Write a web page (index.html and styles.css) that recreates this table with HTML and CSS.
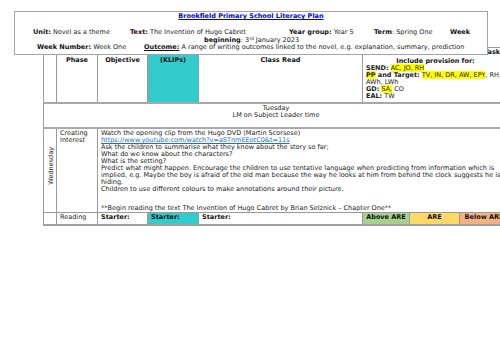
FILE: index.html
```html
<!DOCTYPE html>
<html>
<head>
<meta charset="utf-8">
<link rel="stylesheet" href="styles.css">
</head>
<body>
<div class="page">
  <table class="plan">
    <colgroup>
      <col class="c1"><col class="c2"><col class="c3"><col class="c4"><col class="c5"><col class="c6a"><col class="c6b"><col class="c6c">
    </colgroup>
    <tr class="r-head">
      <td></td>
      <td class="b ctr hd">Phase</td>
      <td class="b ctr hd">Objective</td>
      <td class="b ctr teal hd">(KLIPs)</td>
      <td class="b ctr hd">Class Read</td>
      <td colspan="3" class="prov">
        <div class="b nw task">Task</div>
        <div class="b ctr inc">Include provision for:</div>
        <div class="nw"><b>SEND:</b> <span class="hl">AC, JO, RH</span></div>
        <div class="nw"><b><span class="hl">PP</span> and Target:</b> <span class="hl">TV, IN, DR, AW, EPY</span>, RH,</div>
        <div class="nw">AWh, LWh</div>
        <div class="nw"><b>GD:</b> <span class="hl">SA,</span> CO</div>
        <div class="nw"><b>EAL:</b> TW</div>
      </td>
    </tr>
    <tr class="r-tue">
      <td colspan="8" class="ctr">Tuesday<br>LM on Subject Leader time</td>
    </tr>
    <tr class="r-wed">
      <td class="day"><span class="vert">Wednesday</span></td>
      <td>Creating<br>Interest</td>
      <td colspan="6" class="nw">
        Watch the opening clip from the Hugo DVD (Martin Scorsese)<br>
        <a class="yt" href="#">https://www.youtube.com/watch?v=aSTnmEEotC0&amp;t=11s</a><br>
        Ask the children to summarise what they know about the story so far;<br>
        What do we know about the characters?<br>
        What is the setting?<br>
        Predict what might happen. Encourage the children to use tentative language when predicting from information which is<br>
        implied, e.g. Maybe the boy is afraid of the old man because the way he looks at him from behind the clock suggests he is<br>
        hiding.<br>
        Children to use different colours to make annotations around their picture.
        <div class="begin">**Begin reading the text The Invention of Hugo Cabret by Brian Selznick – Chapter One**</div>
      </td>
    </tr>
    <tr class="r-read">
      <td></td>
      <td>Reading</td>
      <td class="b">Starter:</td>
      <td class="b teal">Starter:</td>
      <td class="b">Starter:</td>
      <td class="b ctr green">Above ARE</td>
      <td class="b ctr yellow">ARE</td>
      <td class="b ctr orange nw">Below ARE</td>
    </tr>
  </table>

  <div class="headbox">
    <div class="title"><a href="#">Brookfield Primary School Literacy Plan</a></div>
    <div class="hrow">
      <span class="f-unit"><b>Unit:</b> Novel as a theme</span>
      <span class="f-text"><b>Text:</b> The Invention of Hugo Cabret</span>
      <span class="f-year"><b>Year group:</b> Year 5</span>
      <span class="f-term"><b>Term</b>: Spring One</span>
      <span class="f-week"><b>Week</b></span>
    </div>
    <div class="hrow">
      <span class="f-begin"><b>beginning</b>: 3<sup>rd</sup> January 2023</span>
    </div>
    <div class="hrow">
      <span class="f-num"><b>Week Number:</b> Week One</span>
      <span><b class="ul">Outcome:</b> A range of writing outcomes linked to the novel, e.g. explanation, summary, prediction</span>
    </div>
  </div>
</div>
</body>
</html>
```

FILE: styles.css
```css
html, body {
  margin: 0;
  padding: 0;
  background: #ffffff;
}
body {
  width: 500px;
  height: 353px;
  overflow: hidden;
  font-family: "DejaVu Sans", Verdana, sans-serif;
  font-size: 6.5px;
  line-height: 7px;
  color: #222222;
}
.page {
  position: relative;
  width: 500px;
  height: 353px;
  padding-top: 47px;
  box-sizing: border-box;
}
.plan {
  margin-left: 43px;
  width: 465px;
  table-layout: fixed;
  border-collapse: collapse;
}
.c1 { width: 13px; }
.c2 { width: 41px; }
.c3 { width: 50px; }
.c4 { width: 51px; }
.c5 { width: 164px; }
.c6a { width: 47px; }
.c6b { width: 50px; }
.c6c { width: 49px; }
.plan td {
  border: 1px solid #9a9a9a;
  padding: 1px 3px 0 3px;
  vertical-align: top;
  overflow: hidden;
}
.plan tr.r-tue td,
.plan tr.r-wed td {
  border-top: 2px solid #a8a8a8;
}
.plan tr.r-read td {
  border-bottom: 2px solid #a0a0a0;
}
.r-head td { height: 53px; }
.plan .r-head td.hd { padding-top: 9px; height: 45px; }
.r-tue td { height: 22px; }
.r-wed td { height: 81px; }
.r-read td { height: 10px; }
.b { font-weight: bold; color: #111; }
.ctr { text-align: center; }
.nw { white-space: nowrap; }
.teal { background: #33cccc; }
.green { background: #a9d18e; }
.yellow { background: #ffd966; }
.orange { background: #f4b183; }
.hl { background: #ffff00; }
.task { padding-left: 118px; }
.inc { margin-top: 1.5px; }
.yt { color: #1f6fd0; text-decoration: underline; }
.begin { margin-top: 12px; }
.day {
  padding: 0;
}
.vert {
  display: block;
  width: 8px;
  margin: 17px auto 0 auto;
  writing-mode: vertical-rl;
  transform: rotate(180deg);
  line-height: 8px;
}
.headbox {
  position: absolute;
  left: 14px;
  top: 11px;
  width: 472px;
  height: 41px;
  border: 1px solid #a4a4a4;
  background: #ffffff;
  padding-top: 1px;
}
.title {
  text-align: center;
  font-weight: bold;
  line-height: 7px;
}
.title a { color: #0000ee; text-decoration: underline; }
.hrow {
  display: flex;
  line-height: 7.5px;
  white-space: nowrap;
}
.hrow b { color: #111; }
.title + .hrow { margin-top: 9px; }
.f-unit { margin-left: 18px; width: 97px; }
.f-text { width: 159px; }
.f-year { width: 85px; }
.f-term { width: 76px; }
.f-begin { margin-left: 189px; }
.f-num { margin-left: 22px; width: 107px; }
.ul { text-decoration: underline; }
sup { font-size: 4.5px; line-height: 0; vertical-align: 2px; }
```
